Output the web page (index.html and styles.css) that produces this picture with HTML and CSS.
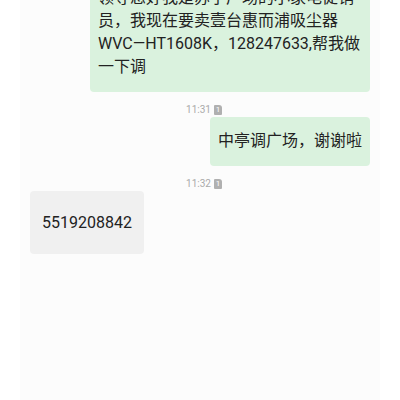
FILE: index.html
```html
<!DOCTYPE html>
<html lang="zh-CN">
<head>
	<meta charset="utf-8">
	<title>信息</title>
	<link rel="stylesheet" href="styles.css">
</head>
<body>
	<div id="chat">
		<ul id="msg-list">
			<li class="msg sent">
				<div class="bubble">领导您好我是苏宁广场的小家电促销员，我现在要卖壹台惠而浦吸尘器WVC—HT1608K，128247633,帮我做一下调</div>
			</li>
			<li class="time">11:31<span class="sim">1</span></li>
			<li class="msg sent">
				<div class="bubble">中亭调广场，谢谢啦</div>
			</li>
			<li class="time">11:32<span class="sim">1</span></li>
			<li class="msg recv">
				<div class="bubble">5519208842</div>
			</li>
		</ul>
	</div>
</body>
</html>
```

FILE: styles.css
```css
*{
	margin: 0;
	padding: 0;
}
html,body{
	height: 100%;
	background-color: #fff;
}
body{
	font-family: Roboto, "Noto Sans CJK SC", sans-serif;
	color: #222;
}
#chat{
	height: 400px;
	margin: 0 20px;
	padding: 0 10px;
	background-color: #fcfcfc;
	overflow: hidden;
}
/*上面一条消息被滚出去了一截*/
#msg-list{
	list-style: none;
	margin-top: -26px;
}
.msg{
	display: flex;
}
.sent{
	justify-content: flex-end;
}
.recv{
	justify-content: flex-start;
}
.bubble{
	max-width: 264px;/*加上左右内边距一共280*/
	padding: 12px 8px 14px;
	font-size: 16px;
	line-height: 23px;
	border-radius: 4px;
}
.sent .bubble{
	background-color: #daf2de;
}
.recv .bubble{
	background-color: #f0f0f0;
	padding: 20px 12px;
}
.time{
	display: flex;
	justify-content: center;
	align-items: center;
	margin: 13px 0 2px 8px;
	font-size: 10px;
	line-height: 10px;
	color: #aaa;
}
.sim{
	width: 8px;
	height: 10px;
	margin-left: 3px;
	border-radius: 1px 3px 1px 1px;
	background-color: #b0b0b0;
	color: #fff;
	font-size: 8px;
	line-height: 10px;
	text-align: center;
}
```
